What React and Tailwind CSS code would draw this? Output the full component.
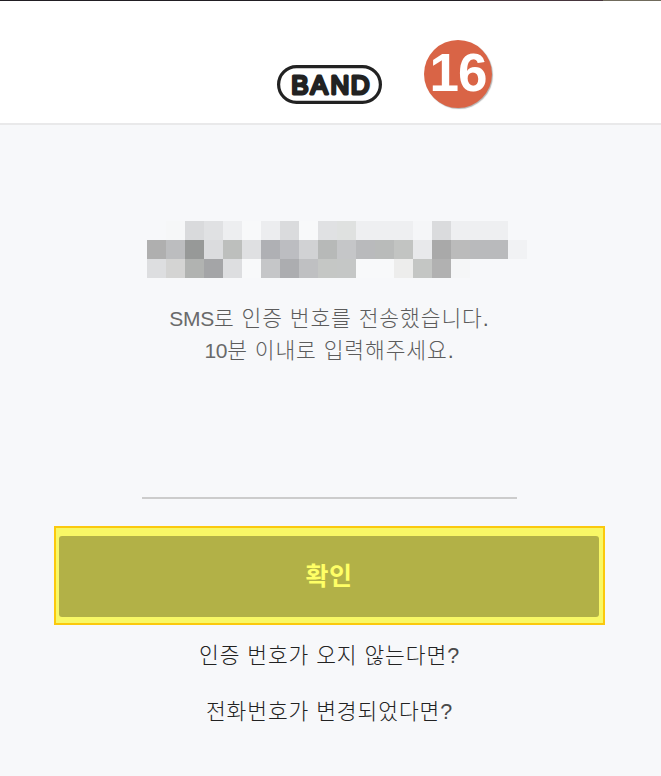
import React from 'react';

const MASK_ROWS = [
  ['#f7f8fa', '#f6f7f8', '#d9dadc', '#e0e1e3', '#edeef0', '#f8f9fa', '#ecedef', '#dadbdd', '#f8f9fa', '#e0e1e3', '#dfe1e0', '#eeeff1', '#eeeff1', '#eeeff1', '#f5f6f8', '#dadbdd', '#eeeff1', '#eeeff1', '#eeeff1', '#f7f8fa'],
  ['#afafaf', '#bcbdbf', '#979998', '#dbdcde', '#bdbfbd', '#dfe0e2', '#afb0b4', '#bcbdc1', '#d1d2d4', '#b7b9b8', '#c5c6c8', '#b9babc', '#b9bbba', '#c2c4c2', '#e8e9eb', '#a9a9a9', '#bbbbbb', '#b9babc', '#b9babc', '#f1f2f4'],
  ['#dddee0', '#d4d4d3', '#b1b3b1', '#a4a5a7', '#dddee0', '#f8f9fa', '#c5c6c8', '#acadb0', '#bfc0c2', '#c5c7c5', '#c5c7c6', '#f8f9fa', '#f8f9fa', '#ededec', '#c4c6c4', '#b1b1b1', '#f5f6f7', '#f7f8fa', '#f7f8fa', '#f7f8fa'],
];

function BandLogo() {
  return (
    <svg width="105" height="39" viewBox="0 0 105 39" role="img" aria-label="BAND">
      <rect x="1.6" y="1.6" width="101.8" height="35.8" rx="17.9" fill="#fff" stroke="#222" strokeWidth="3.2" />
      <text
        x="14.2 33.6 53.4 73.8"
        y="28.5"
        fontFamily="'Liberation Sans', sans-serif"
        fontWeight="400"
        fontSize="26"
        fill="#222"
        stroke="#222"
        strokeWidth="2.9"
        strokeLinejoin="round"
      >
        BAND
      </text>
    </svg>
  );
}

function StepBadge({ step }) {
  return (
    <div className="absolute left-[424px] top-[39px] flex h-[68px] w-[68px] items-center justify-center rounded-full bg-[#d96446] pb-[3px] text-[53px] leading-none font-bold tracking-[-1px] text-white shadow-[1px_1px_1px_#b5b5b5]">
      {step}
    </div>
  );
}

function MaskedNumber() {
  return (
    <div className="ml-[147px] grid w-[380px] grid-cols-20">
      {MASK_ROWS.flat().map((color, i) => (
        <span key={i} className="h-[19px]" style={{ backgroundColor: color }}></span>
      ))}
    </div>
  );
}

export default function App() {
  return (
    <div className="h-[776px] w-[661px] overflow-hidden bg-[#f7f8fa] font-['Liberation_Sans','Noto_Sans_CJK_KR',sans-serif]">
      <div className="flex h-px bg-[#211e23]">
        <div className="w-[480px]"></div>
        <div className="w-[123px] bg-[#46353d]"></div>
        <div className="flex-1 bg-[#706b5c]"></div>
      </div>
      <header className="relative flex h-[124px] justify-center border-b-2 border-[#e9e9ea] bg-white pt-16 pr-0.5">
        <BandLogo />
        <StepBadge step={16} />
      </header>
      <main className="pt-24">
        <MaskedNumber />
        <div className="mt-[25px] flex flex-col items-center pr-[2px] text-[21.5px] leading-8 font-light tracking-[0.9px] whitespace-nowrap text-[#5c5c5c]">
          <p><span className="text-[21px] tracking-[-0.3px] text-[#6a6a6a]">SMS</span>로 인증 번호를 전송했습니다.</p>
          <p><span className="text-[21px] tracking-[-0.3px] text-[#6a6a6a]">10</span>분 이내로 입력해주세요.</p>
        </div>
        <input type="tel" aria-label="인증 번호" className="mt-[84px] ml-[142px] block h-12 w-[375px] border-b-2 border-[#ccc] bg-transparent outline-none" />
        <div className="mt-[27px] ml-[54px] h-[99px] w-[551px] border-2 border-[#fbc90d] bg-[#f8f866] px-[3px] py-2">
          <button type="button" className="block h-[81px] w-[540px] rounded-[3px] bg-[#b2b147] text-[25px] font-bold tracking-[0.5px] text-[#ffff66]">
            확인
          </button>
        </div>
        <div className="flex flex-col items-center pt-[3px] pr-[2px] text-[21.5px] leading-[56px] font-light tracking-[0.9px] whitespace-nowrap text-[#222]">
          <a>인증 번호가 오지 않는다면<span className="text-[#4a4a4a]">?</span></a>
          <a>전화번호가 변경되었다면<span className="text-[#4a4a4a]">?</span></a>
        </div>
      </main>
    </div>
  );
}
